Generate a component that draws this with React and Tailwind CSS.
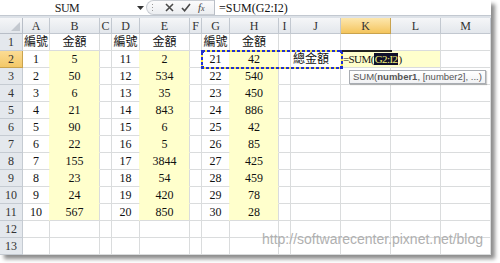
import React from "react";

const letters = ["A", "B", "C", "D", "E", "F", "G", "H", "I", "J", "K", "L", "M"];

const data = [
  [1, 5, 11, 2, 21, 42],
  [2, 50, 12, 534, 22, 540],
  [3, 6, 13, 35, 23, 450],
  [4, 21, 14, 843, 24, 886],
  [5, 90, 15, 6, 25, 42],
  [6, 22, 16, 5, 26, 85],
  [7, 155, 17, 3844, 27, 425],
  [8, 23, 18, 54, 28, 459],
  [9, 24, 19, 420, 29, 78],
  [10, 567, 20, 850, 30, 28],
];

const GRID = "#dadcdd";
const YELLOW = "#ffffcc";

function isYellow(r, c) {
  if (r >= 2 && r <= 11 && (c === 1 || c === 4 || c === 7)) return true;
  if (r === 2 && (c === 10 || c === 11)) return true;
  return false;
}

function cellText(r, c) {
  if (r === 1) {
    if (c === 0 || c === 3 || c === 6) return "編號";
    if (c === 1 || c === 4 || c === 7) return "金額";
    return "";
  }
  if (r >= 2 && r <= 11) {
    const row = data[r - 2];
    const map = { 0: 0, 1: 1, 3: 2, 4: 3, 6: 4, 7: 5 };
    if (map[c] !== undefined) return row[map[c]];
  }
  return "";
}

function Cell({ r, c }) {
  const yellow = isYellow(r, c);
  const right = isYellow(r, c + 1) || yellow ? (yellow && !isYellow(r, c + 1) ? GRID : YELLOW) : GRID;
  const bottom = yellow && isYellow(r + 1, c) ? YELLOW : GRID;

  let content = cellText(r, c);
  let align = "justify-center";
  if (r === 2 && c === 9) {
    content = "總金額";
    align = "justify-start pl-[2px]";
  }
  if (r === 2 && c === 10) {
    align = "justify-start pl-[2px] relative z-10";
    content = (
      <span className="whitespace-nowrap text-[11px] tracking-[-0.6px]">
        =SUM(<span className="bg-[#10102a] text-[#f2f07a] px-[1px]">G2:I2</span>)
      </span>
    );
  }

  return (
    <div
      className={`h-[17px] flex items-center ${align} border-r border-b`}
      style={{ backgroundColor: yellow ? YELLOW : "#ffffff", borderRightColor: right, borderBottomColor: bottom }}
    >
      {content}
    </div>
  );
}

function FormulaBar() {
  return (
    <div className="flex h-[16px] border-b border-[#c2c8d0] bg-white leading-none">
      <div className="w-[134px] flex items-center justify-center text-[12px] text-[#222] tracking-[-0.5px]">SUM</div>
      <div className="w-[12px] flex items-center justify-center">
        <svg width="7" height="4" viewBox="0 0 7 4">
          <path d="M0 0h7L3.5 4z" fill="#333" />
        </svg>
      </div>
      <div className="w-[68px] flex items-center rounded-l-full border-l border-t border-b border-[#c9cdd3] bg-linear-to-b from-[#fbfbfc] to-[#eceef1]">
        <div className="w-[10px] flex flex-col items-center gap-[2px]">
          <span className="w-[1px] h-[1px] bg-[#999]" />
          <span className="w-[1px] h-[1px] bg-[#999]" />
          <span className="w-[1px] h-[1px] bg-[#999]" />
        </div>
        <div className="flex items-center pl-[8px] gap-[7px]">
          <svg width="9" height="9" viewBox="0 0 9 9">
            <path d="M1 1L8 8M8 1L1 8" stroke="#4a4a4a" strokeWidth="1.6" />
          </svg>
          <svg width="10" height="9" viewBox="0 0 10 9">
            <path d="M1 5L3.6 7.8L9 1" stroke="#4a4a4a" strokeWidth="1.6" fill="none" />
          </svg>
          <span className="italic text-[11px] text-[#444] leading-none">
            f<span className="text-[8px]">x</span>
          </span>
        </div>
      </div>
      <div className="flex-1 flex items-center border-l border-[#b9bec6] pl-[4px] text-[12px] text-[#111] whitespace-nowrap">
        =SUM(G2:I2)
      </div>
    </div>
  );
}

export default function App() {
  const rows = Array.from({ length: 13 }, (_, i) => i + 1);
  return (
    <div className="relative w-[500px] h-[263px] bg-white overflow-hidden font-['Liberation_Serif','Noto_Sans_CJK_TC',serif]">
      <div className="relative w-[491px] bg-white shadow-[4px_4px_4px_rgba(0,0,0,0.45)]">
        <FormulaBar />
        <div className="h-[2px] bg-[#dde2e8]" />
        <div className="grid grid-cols-[23px_27px_50px_12px_28px_50px_12px_28px_49px_12px_50px_50px_50px_50px] text-[12px] leading-none text-[#111]">
          <div className="h-[16px] relative bg-linear-to-b from-[#f5f6f8] to-[#e3e7ec] border-r border-b border-[#b8bec7]">
            <svg className="absolute right-[2px] bottom-[2px]" width="9" height="9" viewBox="0 0 9 9">
              <path d="M9 0V9H0z" fill="#c3c8cf" />
            </svg>
          </div>
          {letters.map((l) => (
            <div
              key={l}
              className={`h-[16px] flex items-center justify-center border-r border-b text-[#333] ${
                l === "K"
                  ? "bg-linear-to-b from-[#fde7ad] to-[#f4c55c] border-[#c9a34e]"
                  : "bg-linear-to-b from-[#f5f6f8] to-[#e3e7ec] border-[#c2c8d0]"
              }`}
            >
              {l}
            </div>
          ))}
          {rows.map((r) => (
            <React.Fragment key={r}>
              <div
                className={`h-[17px] flex items-center justify-center border-r border-b text-[#333] ${
                  r === 2
                    ? "bg-linear-to-b from-[#fbdc94] to-[#f3c867] border-[#c9a34e]"
                    : "bg-[#e4e8ed] border-[#c5cbd2]"
                }`}
              >
                {r}
              </div>
              {letters.map((l, c) => (
                <Cell key={l} r={r} c={c} />
              ))}
            </React.Fragment>
          ))}
        </div>

        {/* marching ants around G2:I2 */}
        <svg className="absolute left-[201px] top-[50px] z-20" width="142" height="20" viewBox="0 0 142 20">
          <rect x="1" y="1" width="140" height="17" fill="none" stroke="#f4e64a" strokeWidth="2" />
          <rect x="1" y="1" width="140" height="17" fill="none" stroke="#2030d0" strokeWidth="2" strokeDasharray="3 2" />
          <rect x="0" y="0" width="3" height="3" fill="#2030d0" />
          <rect x="139" y="0" width="3" height="3" fill="#2030d0" />
          <rect x="0" y="16" width="3" height="3" fill="#2030d0" />
          <rect x="139" y="16" width="3" height="3" fill="#2030d0" />
        </svg>

        {/* active cell edge */}
        <div className="absolute left-[342px] top-[50px] w-[50px] h-[2px] bg-[#222] z-20" />

        {/* function tooltip */}
        <div className="absolute left-[349px] top-[70px] z-20 h-[14px] px-[3px] flex items-center border border-[#a9adb3] bg-linear-to-b from-white to-[#f1f2f4] shadow-[1px_1px_1px_rgba(0,0,0,0.2)] text-[9.5px] text-[#555] font-['Liberation_Sans',sans-serif] whitespace-nowrap leading-none">
          SUM(<span className="font-bold">number1</span>, [number2], ...)
        </div>
      </div>

      <div className="absolute left-[262px] top-[232px] text-[14px] text-[#b0b0b0] font-['Liberation_Sans',sans-serif] leading-none">
        http://softwarecenter.pixnet.net/blog
      </div>
    </div>
  );
}
